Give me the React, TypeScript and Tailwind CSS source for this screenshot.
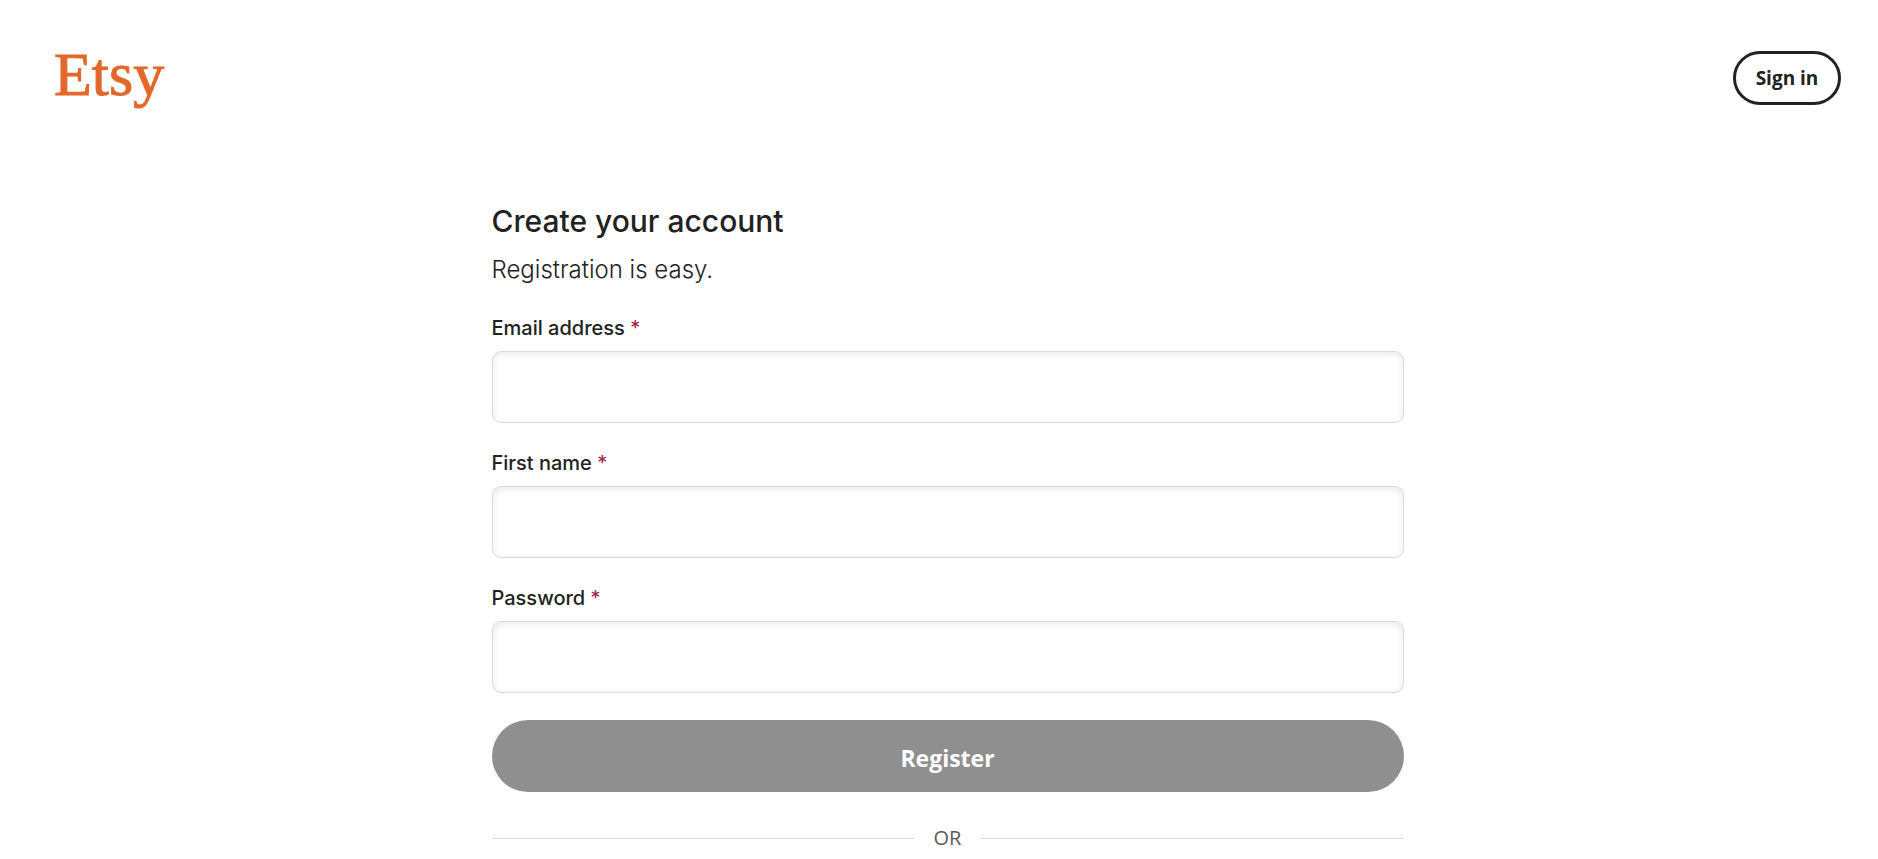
type FieldProps = {
    id: string;
    label: string;
    type: string;
};

function Header() {
    return (
        <header className="flex items-center justify-between">
            <a
                href="/"
                className="pb-2 font-['Liberation_Serif',serif] text-[62px] leading-[62px] text-[#e2682a] [-webkit-text-stroke:1px_#e2682a]"
            >
                Etsy
            </a>
            <button
                type="button"
                className="h-[54px] w-[108px] rounded-full border-3 border-[#222222] font-['Open_Sans',sans-serif] text-[19px] font-bold"
            >
                Sign in
            </button>
        </header>
    );
}

function Field({ id, label, type }: FieldProps) {
    return (
        <div className="mb-[27px] flex flex-col">
            <label htmlFor={id} className="mb-[10px] text-[20px] leading-[26px] font-medium">
                {label} <span className="font-normal text-[#a61a3e]">*</span>
            </label>
            <input
                id={id}
                name={id}
                type={type}
                required
                className="h-[72px] w-full rounded-[9px] border border-[#dadada] bg-white px-4 text-[20px] shadow-[inset_0_2px_7px_rgba(34,34,34,0.1)] outline-none focus:border-[#222222]"
            />
        </div>
    );
}

function Divider() {
    return (
        <div className="mt-8 flex items-center gap-5">
            <div className="h-px flex-1 bg-[#d8d8d8]" />
            <span className="font-['Open_Sans',sans-serif] text-[20px] leading-7 text-[#595959]">
                OR
            </span>
            <div className="h-px flex-1 bg-[#d8d8d8]" />
        </div>
    );
}

export default function App() {
    return (
        <div className="bg-white pt-[43px] pr-[37px] pb-2 pl-[54px] font-['Inter',sans-serif] text-[#222222]">
            <Header />
            <main className="mx-auto mt-[87px] w-full max-w-[912px]">
                <h1 className="text-[30px] leading-[42px] font-medium">
                    Create your account
                </h1>
                <p className="mt-[10px] mb-[27px] text-[24px] leading-9 font-light">
                    Registration is easy.
                </p>
                <form action="">
                    <Field id="email" label="Email address" type="email" />
                    <Field id="firstName" label="First name" type="text" />
                    <Field id="password" label="Password" type="password" />
                    <button
                        type="submit"
                        className="h-[72px] w-full rounded-full bg-[#8f8f8f] pt-1 font-['Open_Sans',sans-serif] text-[23px] font-bold text-white"
                    >
                        Register
                    </button>
                </form>
                <Divider />
            </main>
        </div>
    );
}
